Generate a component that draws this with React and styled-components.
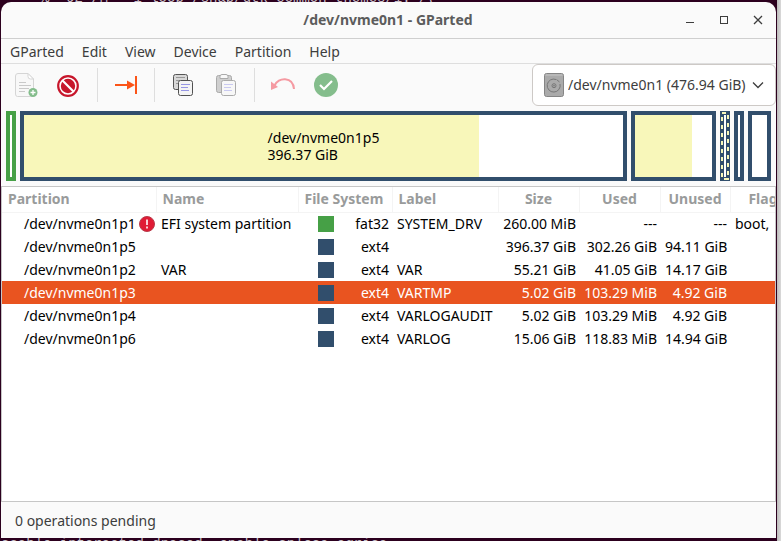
import React, { useState } from "react";
import styled, { createGlobalStyle } from "styled-components";

const GlobalStyle = createGlobalStyle`
  * { box-sizing: border-box; }
  body {
    margin: 0;
    overflow: hidden;
    background: #2c001e;
    color: #3d3d3d;
    font: 14px/20px "Noto Sans", "Open Sans", sans-serif;
  }
  button, select { font: inherit; color: inherit; }
`;

const Desktop = styled.div`
  display: grid;
  grid-template: 2px minmax(0, 1fr) 3px / minmax(0, 1fr);
  height: 100vh;
  padding: 0 4px 0 1px;
  background: linear-gradient(to right, transparent calc(100% - 4px), #bdbbbb calc(100% - 4px), #dadada);
`;

const TerminalLine = styled.div`
  display: flex;
  flex-direction: column;
  justify-content: ${(p) => (p.$end ? "flex-end" : "flex-start")};
  overflow: hidden;
  padding-left: ${(p) => (p.$end ? 40 : 0)}px;
  background: #2c001e;
  color: #c9bfc6;
  font: 14px/${(p) => (p.$end ? 8 : 12)}px "Liberation Mono", monospace;
  white-space: pre;
`;

const Frame = styled.div`
  display: flex;
  flex-direction: column;
  min-height: 0;
  padding-right: 1px;
  background: #2c001e;
`;

const Window = styled.main`
  display: flex;
  flex: 1;
  flex-direction: column;
  min-width: 0;
  min-height: 0;
  border-radius: 10px 10px 0 0;
  background: #fafafa;
  overflow: hidden;
`;

const TitleBar = styled.header`
  display: grid;
  grid-template-columns: 102px 1fr 102px;
  align-items: center;
  height: 37px;
  padding: 0 1px 0 0;
  border-bottom: 1px solid #cfcfcf;
`;

const Title = styled.h1`
  grid-column: 2;
  margin: 0;
  text-align: center;
  font-size: 14px;
  line-height: 20px;
  font-weight: 700;
  color: #5c5c5c;
`;

const WindowButtons = styled.div`
  display: flex;
`;

const WindowButton = styled.button`
  display: grid;
  place-items: center;
  width: 34px;
  height: 34px;
  padding: 0;
  border: 0;
  background: none;
`;

const MenuBar = styled.nav`
  display: flex;
  height: 25px;
  border-bottom: 1px solid #dedede;
`;

const MenuButton = styled.button`
  padding: 1px 9px 0;
  border: 0;
  background: none;
`;

const Toolbar = styled.div`
  display: flex;
  align-items: center;
  gap: 1px;
  height: 42px;
  padding-left: 4px;
`;

const ToolButton = styled.button`
  display: grid;
  place-items: center;
  width: 42px;
  height: 42px;
  padding: 0;
  border: 0;
  background: none;
`;

const ToolSeparator = styled.span`
  width: 1px;
  height: 34px;
  margin: 0 6px;
  background: #dedede;
`;

const DevicePicker = styled.label`
  display: grid;
  grid-template-columns: 20px 1fr 12px;
  align-items: center;
  gap: 4px;
  width: 244px;
  height: 42px;
  margin-left: auto;
  padding: 0 11px;
  border: 1px solid #cdc9c6;
  border-radius: 6px;
  background: #fff;
`;

const DeviceSelect = styled.select`
  grid-column: 2 / 4;
  grid-row: 1;
  min-width: 0;
  padding: 0;
  border: 0;
  appearance: none;
  background: none;
  outline: none;
`;

const Chevron = styled.svg`
  grid-column: 3;
  grid-row: 1;
  pointer-events: none;
`;

const DiskMap = styled.section`
  display: flex;
  gap: 4px;
  height: 80px;
  padding: 5px;
`;

const PartitionBar = styled.div`
  display: grid;
  align-items: center;
  flex: ${(p) => (p.$weight ? `${p.$weight} 1 0` : "0 0 10px")};
  min-width: 0;
  border: 4px solid ${(p) => p.$color};
  background: linear-gradient(to right, #f8f7ba ${(p) => p.$used || 0}%, #fff ${(p) => p.$used || 0}%);
  color: #000;
  line-height: 17px;
`;

const BarText = styled.div`
  justify-self: center;
`;

const BarLine = styled.div`
  height: 17px;
`;

const SelectedBar = styled.svg`
  flex: 0 0 10px;
`;

const TableArea = styled.section`
  flex: 1;
  min-height: 0;
  overflow: hidden;
  border: 1px solid #c6c6c6;
  background: #fff;
`;

const Table = styled.table`
  table-layout: fixed;
  min-width: 100%;
  width: 801px;
  border-collapse: collapse;
  color: #000;
  white-space: nowrap;
`;

const Column = styled.col`
  width: ${(p) => p.$width}px;
`;

const HeadCell = styled.th`
  height: 25px;
  padding: 0 6px;
  border: solid #f4f4f4;
  border-width: 0 1px 1px 0;
  color: #999b9b;
  font-weight: 700;
  text-align: ${(p) => p.$align || "left"};
`;

const Row = styled.tr`
  height: 23px;
  background: ${(p) => (p.$selected ? "#e95420" : "transparent")};
  color: ${(p) => (p.$selected ? "#fff" : "#000")};
`;

const Cell = styled.td`
  padding: 0 ${(p) => (p.$tight ? 1 : 3)}px 0 5px;
  text-align: ${(p) => p.$align || "left"};
`;

const Device = styled.div`
  display: flex;
  align-items: center;
  justify-content: space-between;
  padding-left: 17px;
`;

const FileSystem = styled.div`
  display: flex;
  align-items: center;
  justify-content: space-between;
  padding-left: 15px;
`;

const Swatch = styled.span`
  width: 16px;
  height: 16px;
  background: ${(p) => p.$color};
`;

const StatusBar = styled.footer`
  height: 36px;
  padding: 9px 14px 0;
`;

const NewIcon = () => (
  <svg width="24" height="24" fill="none">
    <path d="M4 .5h10l5.500 5.500V21q0 2.500-2.500 2.500H3.500Q1.500 23.500 1.500 21V3Q1.500.5 4 .5Z" fill="#f8f8f8" stroke="#d5d5d5" />
    <path d="M14 .5v3q0 2.500 2.500 2.500h3Z" fill="#fff" stroke="#d5d5d5" />
    <path d="M5 9.500h7M5 12.500h12M5 15.500h10M5 18.500h6" stroke="#c9c9c9" />
    <circle cx="19" cy="19.500" r="4.500" fill="#84bd8c" />
    <path d="M19 17v5M16.500 19.500h5" stroke="#fff" strokeWidth="1.300" />
  </svg>
);

const CancelIcon = () => (
  <svg width="24" height="24" fill="none">
    <circle cx="11" cy="13" r="9.800" fill="#fff" stroke="#c7162b" strokeWidth="2.200" />
    <circle cx="11" cy="13" r="7.200" fill="#c7162b" />
    <path d="m5.500 7.500 11 11" stroke="#fff" strokeWidth="2.200" />
  </svg>
);

const ResizeIcon = () => (
  <svg width="24" height="24" fill="none">
    <path d="M1 12h13M22 3v18" stroke="#fb5418" strokeWidth="2" />
    <path d="m13 7.500 8 4.500-8 4.500Z" fill="#fb5418" />
  </svg>
);

const CopyIcon = () => (
  <svg width="24" height="24" fill="none">
    <rect x="2.500" y="1.500" width="14" height="15" rx="2" fill="#d8d8d8" stroke="#555" />
    <path d="M5 4.500h9M5 7.500h4M5 10.500h2" stroke="#999" />
    <rect x="7.500" y="7.500" width="14" height="15" rx="2" fill="#f4f4f4" stroke="#505050" />
    <path d="M10 11.500h9M10 14.500h7M10 17.500h8" stroke="#9696e4" />
  </svg>
);

const PasteIcon = () => (
  <svg width="24" height="24" fill="none">
    <rect x="2.500" y="2.500" width="15" height="17" rx="2" fill="#cfcfcf" stroke="#aaa" />
    <path d="M6 5.500v-2q0-2 2-2h4q2 0 2 2v2Z" fill="#f8f8f8" stroke="#aaa" />
    <rect x="7.500" y="7.500" width="14" height="15" rx="2" fill="#f7f7f7" stroke="#aaa" />
    <path d="M10 11.500h9M10 14.500h7M10 17.500h8" stroke="#c9c9f0" />
  </svg>
);

const UndoIcon = () => (
  <svg width="24" height="24" fill="none">
    <path d="M3.500 12.500C7 4 22 3 23 16" stroke="#f59aa2" strokeWidth="2" />
    <path d="m0 8.500v8.500l7-3Z" fill="#f59aa2" />
  </svg>
);

const ApplyIcon = () => (
  <svg width="24" height="24" fill="none">
    <circle cx="12" cy="12" r="12" fill="#84bd8c" />
    <path d="m6 12 4 4 8-8" stroke="#fff" strokeWidth="2.200" />
  </svg>
);

const DiskIcon = () => (
  <svg width="20" height="24" fill="none">
    <rect x=".5" y=".5" width="19" height="23" rx="2" fill="#aaa" stroke="#858585" />
    <path d="M1.500 2h17" stroke="#c6c6c6" />
    <path d="M12 6.500a6.500 6.500 0 1 0 4 4.500M12.500 6.500l3 2.500" stroke="#777" />
    <circle cx="10" cy="12.700" r="2" stroke="#777" />
    <circle cx="10" cy="12.700" r=".7" fill="#666" />
  </svg>
);

const WarningIcon = () => (
  <svg width="16" height="16" role="img" aria-label="Warning">
    <circle cx="8" cy="8" r="7.500" fill="#e01b35" stroke="#b83b4a" />
    <path d="M8 3.500v5.500M8 10.500v2" stroke="#fff" strokeWidth="1.600" />
  </svg>
);

const DASHES = [0, 1, 2, 3, 4, 5, 6, 7];

const DashedPartition = () => (
  <SelectedBar width="10" height="70" role="img" aria-label="/dev/nvme0n1p3, selected">
    <rect width="10" height="70" fill="#314e6c" />
    <rect x="4" y="4" width="2" height="62" fill="#fff" />
    <g fill="#f8f7ba">
      <rect x="2" y="1" width="4" height="2" />
      <rect x="4" y="67" width="5" height="2" />
      {DASHES.map((n) => (
        <React.Fragment key={n}>
          <rect x="1" y={6 + n * 8} width="2" height="4" />
          <rect x="7" y={4 + n * 8} width="2" height="4" />
        </React.Fragment>
      ))}
    </g>
  </SelectedBar>
);

const NAVY = "#314e6c";
const GREEN = "#46a046";

const MENUS = ["GParted", "Edit", "View", "Device", "Partition", "Help"];

const TOOLS = [
  [["New", NewIcon], ["Delete", CancelIcon]],
  [["Resize/Move", ResizeIcon]],
  [["Copy", CopyIcon], ["Paste", PasteIcon]],
  [["Undo", UndoIcon], ["Apply", ApplyIcon]],
];

const COLUMNS = [
  { title: "Partition", width: 154 },
  { title: "Name", width: 142 },
  { title: "File System", width: 94 },
  { title: "Label", width: 106 },
  { title: "Size", width: 81, align: "center" },
  { title: "Used", width: 81, align: "center" },
  { title: "Unused", width: 70, align: "center" },
  { title: "Flags", width: 73, align: "center" },
];

const PARTITIONS = [
  { dev: "/dev/nvme0n1p1", warn: true, name: "EFI system partition", fs: "fat32", label: "SYSTEM_DRV", size: "260.00 MiB", used: "---", unused: "---", flags: "boot," },
  { dev: "/dev/nvme0n1p5", fs: "ext4", size: "396.37 GiB", used: "302.26 GiB", unused: "94.11 GiB" },
  { dev: "/dev/nvme0n1p2", name: "VAR", fs: "ext4", label: "VAR", size: "55.21 GiB", used: "41.05 GiB", unused: "14.17 GiB" },
  { dev: "/dev/nvme0n1p3", fs: "ext4", label: "VARTMP", size: "5.02 GiB", used: "103.29 MiB", unused: "4.92 GiB" },
  { dev: "/dev/nvme0n1p4", fs: "ext4", label: "VARLOGAUDIT", size: "5.02 GiB", used: "103.29 MiB", unused: "4.92 GiB" },
  { dev: "/dev/nvme0n1p6", fs: "ext4", label: "VARLOG", size: "15.06 GiB", used: "118.83 MiB", unused: "14.94 GiB" },
];

export default function App() {
  const [selected, setSelected] = useState("/dev/nvme0n1p3");
  return (
    <>
      <GlobalStyle />
      <Desktop>
        <TerminalLine $end aria-hidden="true">{"%  92 /M  -1 loop /snap/gtk-common-themes/1: /("}</TerminalLine>
        <Frame>
          <Window>
            <TitleBar>
              <Title>/dev/nvme0n1 - GParted</Title>
              <WindowButtons>
                <WindowButton aria-label="Minimize">
                  <svg width="10" height="10"><path d="M1 7.500h8" stroke="#3d3d3d" /></svg>
                </WindowButton>
                <WindowButton aria-label="Maximize">
                  <svg width="10" height="10" fill="none"><rect x="1.500" y="1.500" width="7" height="7" stroke="#3d3d3d" /></svg>
                </WindowButton>
                <WindowButton aria-label="Close">
                  <svg width="10" height="10"><path d="m1 1 8 8M9 1 1 9" stroke="#3d3d3d" strokeWidth="1.300" /></svg>
                </WindowButton>
              </WindowButtons>
            </TitleBar>
            <MenuBar>
              {MENUS.map((m) => <MenuButton key={m}>{m}</MenuButton>)}
            </MenuBar>
            <Toolbar>
              {TOOLS.map((group, i) => (
                <React.Fragment key={i}>
                  {i > 0 && <ToolSeparator />}
                  {group.map(([label, Icon]) => (
                    <ToolButton key={label} aria-label={label}><Icon /></ToolButton>
                  ))}
                </React.Fragment>
              ))}
              <DevicePicker>
                <DiskIcon />
                <DeviceSelect aria-label="Device">
                  <option>/dev/nvme0n1 (476.94 GiB)</option>
                </DeviceSelect>
                <Chevron width="12" height="8" fill="none">
                  <path d="m1 1.500 5 5 5-5" stroke="#3d3d3d" strokeWidth="1.300" />
                </Chevron>
              </DevicePicker>
            </Toolbar>
            <DiskMap>
              <PartitionBar $color={GREEN} />
              <PartitionBar $color={NAVY} $weight={599} $used={76}>
                <BarText>
                  <BarLine>/dev/nvme0n1p5</BarLine>
                  <BarLine>396.37 GiB</BarLine>
                </BarText>
              </PartitionBar>
              <PartitionBar $color={NAVY} $weight={77} $used={74} />
              <DashedPartition />
              <PartitionBar $color={NAVY} />
              <PartitionBar $color={NAVY} $weight={15} />
            </DiskMap>
            <TableArea>
              <Table>
                <colgroup>
                  {COLUMNS.map((c) => <Column key={c.title} $width={c.width} />)}
                </colgroup>
                <thead>
                  <tr>
                    {COLUMNS.map((c) => <HeadCell key={c.title} $align={c.align}>{c.title}</HeadCell>)}
                  </tr>
                </thead>
                <tbody>
                  {PARTITIONS.map((p) => (
                    <Row key={p.dev} $selected={p.dev === selected} onClick={() => setSelected(p.dev)}>
                      <Cell $tight><Device>{p.dev}{p.warn && <WarningIcon />}</Device></Cell>
                      <Cell>{p.name}</Cell>
                      <Cell>
                        <FileSystem><Swatch $color={p.fs === "fat32" ? GREEN : NAVY} />{p.fs}</FileSystem>
                      </Cell>
                      <Cell>{p.label}</Cell>
                      <Cell $align="right">{p.size}</Cell>
                      <Cell $align="right">{p.used}</Cell>
                      <Cell $align="right">{p.unused}</Cell>
                      <Cell>{p.flags}</Cell>
                    </Row>
                  ))}
                </tbody>
              </Table>
            </TableArea>
            <StatusBar>0 operations pending</StatusBar>
          </Window>
        </Frame>
        <TerminalLine aria-hidden="true">{"ssable interacted dpased  enable splosa agrisa"}</TerminalLine>
      </Desktop>
    </>
  );
}
